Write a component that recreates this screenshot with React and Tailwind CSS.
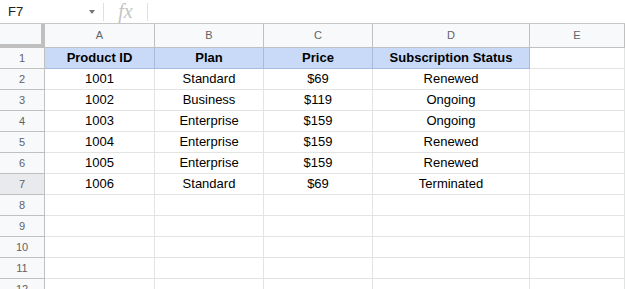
const cols = [
  { key: 'A', w: 'w-[110px]' },
  { key: 'B', w: 'w-[109px]' },
  { key: 'C', w: 'w-[109px]' },
  { key: 'D', w: 'w-[157px]' },
  { key: 'E', w: 'flex-1' },
]

const rows = [
  ['Product ID', 'Plan', 'Price', 'Subscription Status'],
  ['1001', 'Standard', '$69', 'Renewed'],
  ['1002', 'Business', '$119', 'Ongoing'],
  ['1003', 'Enterprise', '$159', 'Ongoing'],
  ['1004', 'Enterprise', '$159', 'Renewed'],
  ['1005', 'Enterprise', '$159', 'Renewed'],
  ['1006', 'Standard', '$69', 'Terminated'],
  [], [], [], [], [],
]

function FormulaBar() {
  return (
    <div className="flex items-center h-[24px] border-b border-[#c7c7c7] bg-white">
      <div className="w-[103px] flex items-center justify-between pl-[8px] pr-[8px] text-[13px] text-[#202124]">
        <span>F7</span>
        <span className="w-0 h-0 border-l-[3px] border-r-[3px] border-t-[4px] border-l-transparent border-r-transparent border-t-[#757575]" />
      </div>
      <div className="w-px h-[18px] bg-[#e0e0e0]" />
      <div className="w-[43px] flex justify-center text-[20px] italic text-[#c4c4c4] font-['Liberation_Serif',serif] leading-none pb-[2px]">fx</div>
      <div className="w-px h-[18px] bg-[#e0e0e0]" />
    </div>
  )
}

function HeaderRow() {
  return (
    <div className="flex h-[24px] bg-[#f8f9fa]">
      <div className="w-[45px] shrink-0 border-r-4 border-b-4 border-[#c0c0c0]" />
      {cols.map((c) => (
        <div
          key={c.key}
          className={`${c.w} shrink-0 flex items-center justify-center border-r border-b border-[#c0c0c0] text-[11px] text-[#5f6368]`}
        >
          {c.key}
        </div>
      ))}
    </div>
  )
}

function DataRow({ index, cells }) {
  const isHead = index === 0
  const selected = index === 6
  return (
    <div className="flex h-[21px]">
      <div
        className={`w-[45px] shrink-0 flex items-center justify-center border-r border-b border-[#c0c0c0] text-[11px] text-[#5f6368] ${selected ? 'bg-[#e8eaed]' : 'bg-[#f8f9fa]'}`}
      >
        {index + 1}
      </div>
      {cols.map((c, i) => {
        const val = cells[i]
        const blue = isHead && i < 4
        return (
          <div
            key={c.key}
            className={`${c.w} shrink-0 flex items-center justify-center border-r border-b text-[13px] text-black ${
              blue ? 'bg-[#c9daf8] border-[#a7bbe0] font-bold' : 'border-[#e2e3e3]'
            }`}
          >
            {val}
          </div>
        )
      })}
    </div>
  )
}

export default function App() {
  return (
    <div className="w-[625px] h-[289px] overflow-hidden bg-white font-['Liberation_Sans',Arial,sans-serif]">
      <FormulaBar />
      <HeaderRow />
      {rows.map((r, i) => (
        <DataRow key={i} index={i} cells={r} />
      ))}
    </div>
  )
}
